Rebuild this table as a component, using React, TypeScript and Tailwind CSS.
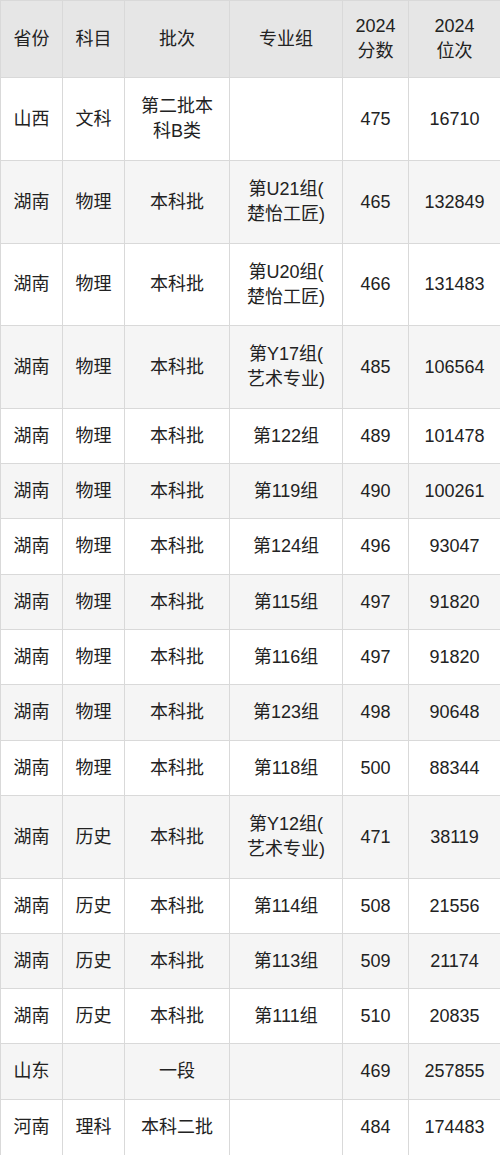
import React from "react";

type Row = { p: string; s: string; b: string; g: string; score: string; rank: string; h: number };

const rows: Row[] = [
  { p: "山西", s: "文科", b: "第二批本\n科B类", g: "", score: "475", rank: "16710", h: 83 },
  { p: "湖南", s: "物理", b: "本科批", g: "第U21组(\n楚怡工匠)", score: "465", rank: "132849", h: 83 },
  { p: "湖南", s: "物理", b: "本科批", g: "第U20组(\n楚怡工匠)", score: "466", rank: "131483", h: 82 },
  { p: "湖南", s: "物理", b: "本科批", g: "第Y17组(\n艺术专业)", score: "485", rank: "106564", h: 83 },
  { p: "湖南", s: "物理", b: "本科批", g: "第122组", score: "489", rank: "101478", h: 55 },
  { p: "湖南", s: "物理", b: "本科批", g: "第119组", score: "490", rank: "100261", h: 55 },
  { p: "湖南", s: "物理", b: "本科批", g: "第124组", score: "496", rank: "93047", h: 56 },
  { p: "湖南", s: "物理", b: "本科批", g: "第115组", score: "497", rank: "91820", h: 55 },
  { p: "湖南", s: "物理", b: "本科批", g: "第116组", score: "497", rank: "91820", h: 55 },
  { p: "湖南", s: "物理", b: "本科批", g: "第123组", score: "498", rank: "90648", h: 56 },
  { p: "湖南", s: "物理", b: "本科批", g: "第118组", score: "500", rank: "88344", h: 55 },
  { p: "湖南", s: "历史", b: "本科批", g: "第Y12组(\n艺术专业)", score: "471", rank: "38119", h: 83 },
  { p: "湖南", s: "历史", b: "本科批", g: "第114组", score: "508", rank: "21556", h: 55 },
  { p: "湖南", s: "历史", b: "本科批", g: "第113组", score: "509", rank: "21174", h: 55 },
  { p: "湖南", s: "历史", b: "本科批", g: "第111组", score: "510", rank: "20835", h: 55 },
  { p: "山东", s: "", b: "一段", g: "", score: "469", rank: "257855", h: 56 },
  { p: "河南", s: "理科", b: "本科二批", g: "", score: "484", rank: "174483", h: 56 },
];

function Lines({ t }: { t: string }) {
  const parts = t.split("\n");
  return (
    <>
      {parts.map((x, i) => (
        <React.Fragment key={i}>
          {x}
          {i < parts.length - 1 && <br />}
        </React.Fragment>
      ))}
    </>
  );
}

const cell = "border border-[#d9d9d9] text-center align-middle px-1 leading-[25px]";

export default function App() {
  return (
    <div
      className="w-[500px] h-[1155px] bg-white text-[#222] text-[18px] overflow-hidden"
      style={{ fontFamily: '"Liberation Sans", "Noto Sans CJK SC", sans-serif' }}
    >
      <table className="w-[500px] table-fixed border-collapse">
        <colgroup>
          <col className="w-[62px]" />
          <col className="w-[62px]" />
          <col className="w-[105px]" />
          <col className="w-[113px]" />
          <col className="w-[66px]" />
          <col className="w-[92px]" />
        </colgroup>
        <thead>
          <tr className="h-[77px] bg-[#e6e6e6]">
            <th className={cell + " font-normal"}>省份</th>
            <th className={cell + " font-normal"}>科目</th>
            <th className={cell + " font-normal"}>批次</th>
            <th className={cell + " font-normal"}>专业组</th>
            <th className={cell + " font-normal"}>
              2024
              <br />
              分数
            </th>
            <th className={cell + " font-normal"}>
              2024
              <br />
              位次
            </th>
          </tr>
        </thead>
        <tbody>
          {rows.map((r, i) => (
            <tr
              key={i}
              className={i % 2 === 1 ? "bg-[#f5f5f5]" : "bg-white"}
              style={{ height: r.h }}
            >
              <td className={cell}>{r.p}</td>
              <td className={cell}>{r.s}</td>
              <td className={cell}>
                <Lines t={r.b} />
              </td>
              <td className={cell}>
                <Lines t={r.g} />
              </td>
              <td className={cell}>{r.score}</td>
              <td className={cell}>{r.rank}</td>
            </tr>
          ))}
        </tbody>
      </table>
    </div>
  );
}
